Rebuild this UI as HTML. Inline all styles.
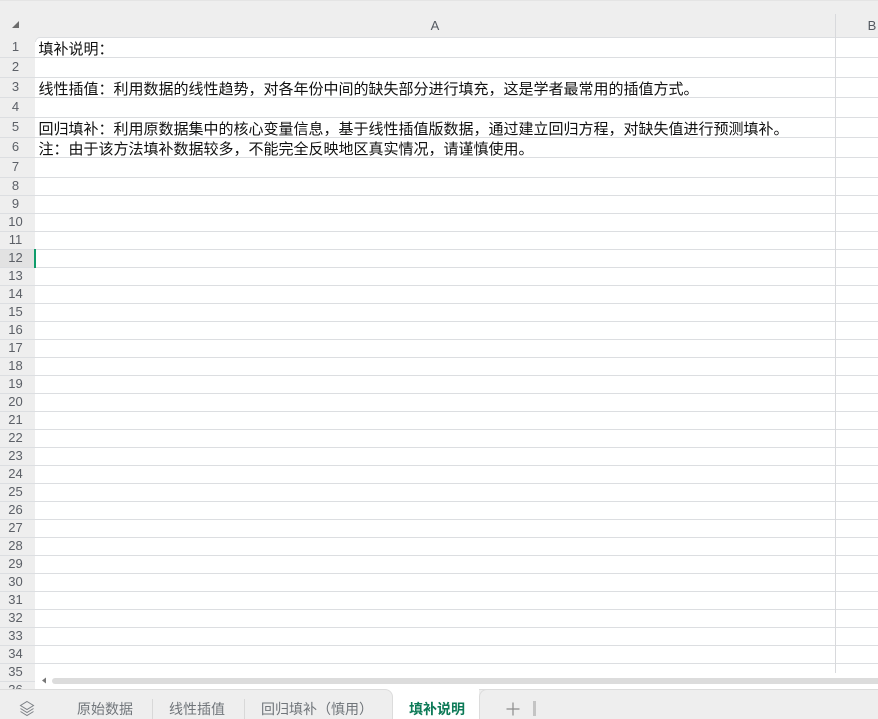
<!DOCTYPE html>
<html><head><meta charset="utf-8">
<style>
html,body{margin:0;padding:0;width:878px;height:719px;overflow:hidden;background:#fff}
body{position:relative;font-family:"Liberation Sans","Noto Sans CJK SC",sans-serif}
div{position:absolute;box-sizing:border-box}
.h{left:0;width:878px;height:1px;background:#dcdee1}
.n{left:0;width:31px;text-align:center;font-size:13px;line-height:18px;color:#5c6067;height:18px}
.t{left:38.5px;font-size:15px;line-height:20px;color:#111;white-space:nowrap;font-family:"Liberation Sans","Noto Sans CJK SC",sans-serif}
.tab{top:689px;height:30px;line-height:40px;font-size:14px;color:#70757a;white-space:nowrap}
.sep{top:699px;width:1px;height:20px;background:#d8d8d8}
</style></head><body>
<div style="left:0;top:0;width:878px;height:38px;background:#eeeeee"></div>
<div style="left:0;top:0;width:878px;height:1px;background:#e4e4e4"></div>
<div style="left:0;top:38px;width:35px;height:651px;background:#eeeeee"></div>
<svg style="position:absolute;left:11px;top:20px" width="9" height="9"><path d="M8 1V8H1Z" fill="#6c6c6c"/></svg>
<div style="left:35px;top:18px;width:800px;text-align:center;font-size:13px;line-height:16px;color:#555a61">A</div>
<div style="left:836px;top:18px;width:72px;text-align:center;font-size:13px;line-height:16px;color:#555a61">B</div>
<div class="h" style="top:37px;left:38px"></div>
<div class="h" style="top:57px"></div><div class="h" style="top:77px"></div><div class="h" style="top:97px"></div><div class="h" style="top:117px"></div><div class="h" style="top:137px"></div><div class="h" style="top:157px"></div><div class="h" style="top:177px"></div><div class="h" style="top:195px"></div><div class="h" style="top:213px"></div><div class="h" style="top:231px"></div><div class="h" style="top:249px"></div><div class="h" style="top:267px"></div><div class="h" style="top:285px"></div><div class="h" style="top:303px"></div><div class="h" style="top:321px"></div><div class="h" style="top:339px"></div><div class="h" style="top:357px"></div><div class="h" style="top:375px"></div><div class="h" style="top:393px"></div><div class="h" style="top:411px"></div><div class="h" style="top:429px"></div><div class="h" style="top:447px"></div><div class="h" style="top:465px"></div><div class="h" style="top:483px"></div><div class="h" style="top:501px"></div><div class="h" style="top:519px"></div><div class="h" style="top:537px"></div><div class="h" style="top:555px"></div><div class="h" style="top:573px"></div><div class="h" style="top:591px"></div><div class="h" style="top:609px"></div><div class="h" style="top:627px"></div><div class="h" style="top:645px"></div><div class="h" style="top:663px"></div><div class="h" style="top:681px;width:35px"></div>
<div style="left:835px;top:14px;width:1px;height:659px;background:#d8d9dc"></div>
<div style="left:0;top:250px;width:35px;height:17px;background:#e2e2e2"></div>
<div style="left:34px;top:249px;width:2px;height:19px;background:#0f9d6b"></div>
<div class="n" style="top:38px">1</div><div class="n" style="top:58px">2</div><div class="n" style="top:78px">3</div><div class="n" style="top:98px">4</div><div class="n" style="top:118px">5</div><div class="n" style="top:138px">6</div><div class="n" style="top:158px">7</div><div class="n" style="top:177px">8</div><div class="n" style="top:195px">9</div><div class="n" style="top:213px">10</div><div class="n" style="top:231px">11</div><div class="n" style="top:249px">12</div><div class="n" style="top:267px">13</div><div class="n" style="top:285px">14</div><div class="n" style="top:303px">15</div><div class="n" style="top:321px">16</div><div class="n" style="top:339px">17</div><div class="n" style="top:357px">18</div><div class="n" style="top:375px">19</div><div class="n" style="top:393px">20</div><div class="n" style="top:411px">21</div><div class="n" style="top:429px">22</div><div class="n" style="top:447px">23</div><div class="n" style="top:465px">24</div><div class="n" style="top:483px">25</div><div class="n" style="top:501px">26</div><div class="n" style="top:519px">27</div><div class="n" style="top:537px">28</div><div class="n" style="top:555px">29</div><div class="n" style="top:573px">30</div><div class="n" style="top:591px">31</div><div class="n" style="top:609px">32</div><div class="n" style="top:627px">33</div><div class="n" style="top:645px">34</div><div class="n" style="top:663px">35</div>
<div class="t" style="top:40px">填补说明：</div>
<div class="t" style="top:80px">线性插值：利用数据的线性趋势，对各年份中间的缺失部分进行填充，这是学者最常用的插值方式。</div>
<div class="t" style="top:120px">回归填补：利用原数据集中的核心变量信息，基于线性插值版数据，通过建立回归方程，对缺失值进行预测填补。</div>
<div class="t" style="top:140px">注：由于该方法填补数据较多，不能完全反映地区真实情况，请谨慎使用。</div>
<div class="n" style="top:681px;height:8px;overflow:hidden">36</div>
<div style="left:35px;top:672px;width:800px;height:17px;background:#fff"></div>
<div style="left:836px;top:673px;width:42px;height:16px;background:#fff"></div>
<svg style="position:absolute;left:41px;top:677px" width="7" height="7"><path d="M5 0.5V6.5L1 3.5Z" fill="#777"/></svg>
<div style="left:52px;top:678px;width:826px;height:6px;background:#dcdcdc;border-radius:3px 0 0 3px"></div>
<div style="left:0;top:689px;width:878px;height:30px;background:#eeeeee"></div>
<div style="left:0;top:689px;width:878px;height:1px;background:#dcdcdc"></div>
<svg style="position:absolute;left:35px;top:37px" width="5" height="5"><path d="M0 0H5A5 5 0 0 0 0 5Z" fill="#eeeeee"/><path d="M0.5 5A4.5 4.5 0 0 1 5 0.5" fill="none" stroke="#dcdee1"/></svg>
<svg style="position:absolute;left:19px;top:700px" width="16" height="18" fill="none" stroke="#7d8186" stroke-width="1"><path d="M8 1.5L14.5 5.5L8 9.5L1.5 5.5Z"/><path d="M1.5 8.5L8 12.5L14.5 8.5"/><path d="M1.5 11.5L8 15.5L14.5 11.5"/></svg>
<div class="tab" style="left:77px">原始数据</div>
<div class="sep" style="left:152px"></div>
<div class="tab" style="left:169px">线性插值</div>
<div class="sep" style="left:244px"></div>
<div class="tab" style="left:261px">回归填补（慎用）</div>
<div style="left:380px;top:689px;width:13px;height:30px;background:#fff"></div>
<div style="left:378px;top:689px;width:15px;height:30px;background:#eee;border-top:1px solid #dcdcdc;border-right:1px solid #dcdcdc;border-top-right-radius:8px"></div>
<div style="left:393px;top:689px;width:86px;height:30px;background:#fff"></div>
<div class="tab" style="left:409px;color:#0d7a57;font-weight:bold">填补说明</div>
<div style="left:479px;top:689px;width:14px;height:30px;background:#eee;border-top:1px solid #dcdcdc;border-left:1px solid #dcdcdc;border-top-left-radius:8px"></div>
<svg style="position:absolute;left:506px;top:702px" width="14" height="14"><path d="M7 0.5V13.5M0.5 7H13.5" stroke="#8c8c8c" stroke-width="1.2"/></svg>
<div style="left:533px;top:701px;width:3px;height:15px;background:#c4c4c4"></div>
</body></html>
